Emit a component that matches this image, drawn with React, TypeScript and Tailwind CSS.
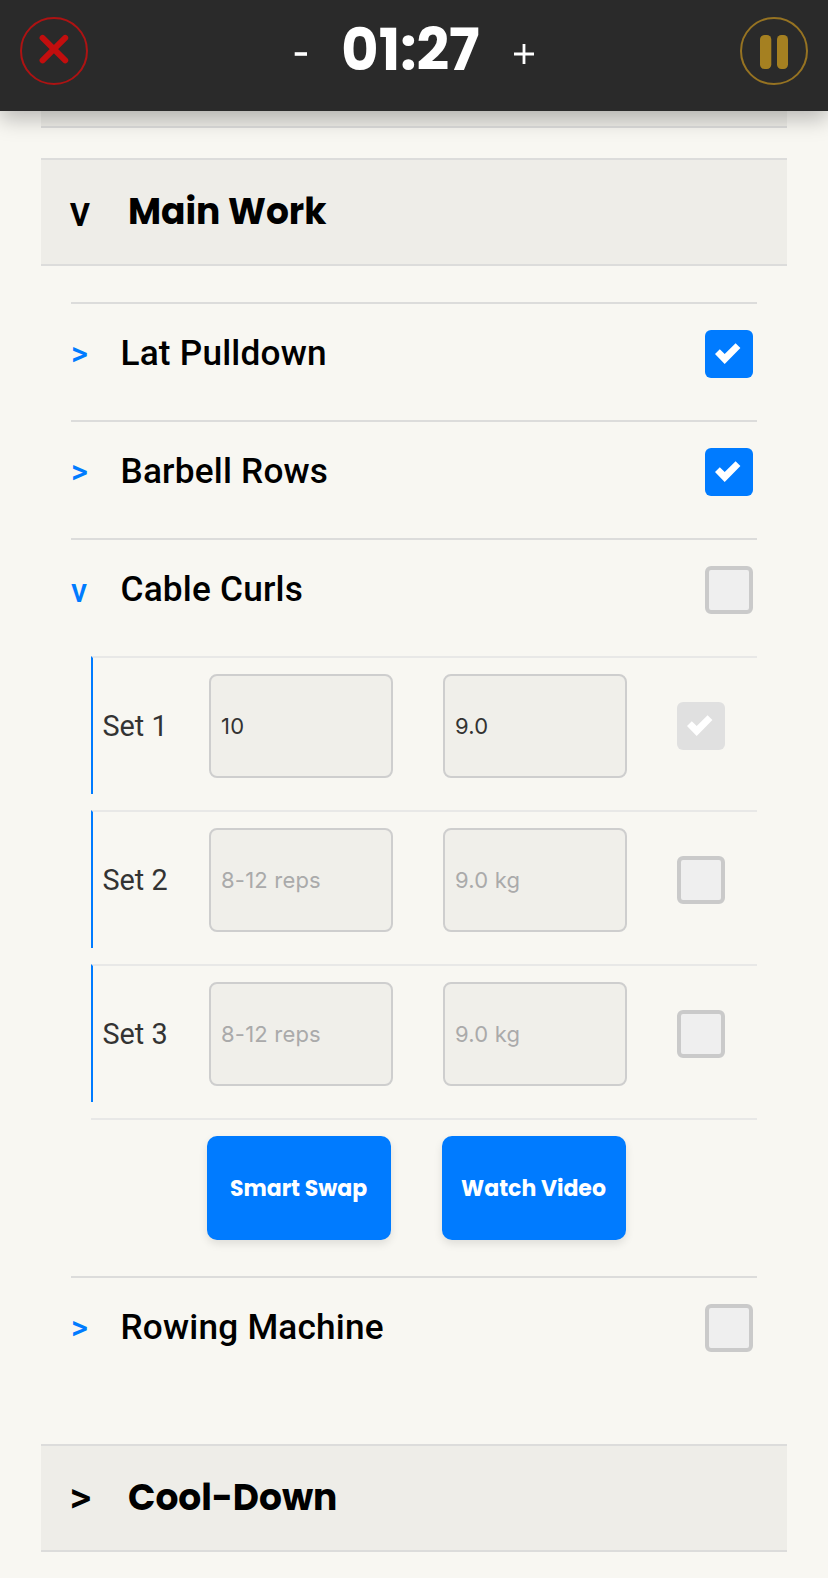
import React from "react";

const display = "font-['Poppins','Inter',sans-serif]";

function CheckBox({ checked = false, muted = false }: { checked?: boolean; muted?: boolean }) {
  if (!checked) {
    return <button aria-label="Mark done" className="size-12 shrink-0 rounded-md border-4 border-[#cacaca] bg-[#efefef]" />;
  }
  return (
    <button aria-label="Done" className={`size-12 shrink-0 rounded-md ${muted ? "bg-[#e0e0e0]" : "bg-[#007bff]"}`}>
      <svg viewBox="0 0 48 48" className="size-12">
        <path d="M10 24l4.8-4.8 4.9 4.9 10.9-10.8 4.8 4.8L19.7 34z" fill="#fff" />
      </svg>
    </button>
  );
}

function SectionBar({ title, open = false }: { title: string; open?: boolean }) {
  return (
    <div className="flex h-[108px] items-center border-y-2 border-[#dcdcdb] bg-[#eeede8] pl-[28.5px]">
      <span className="w-[58.5px] font-['Roboto'] text-[42px] leading-[52px] font-medium text-black">{open ? "v" : ">"}</span>
      <h2 className={`${display} text-[36px] leading-[52px] font-bold text-black`}>{title}</h2>
    </div>
  );
}

function Exercise({ name, done = false, open = false }: { name: string; done?: boolean; open?: boolean }) {
  return (
    <div className="flex h-[118px] items-start border-t-2 border-[#dcdcdb] pt-[26px] pr-1">
      <span className={`w-[49.5px] font-['Roboto'] text-[32.5px] font-medium text-[#007bff] ${open ? "leading-[50px]" : "leading-[48px]"}`}>
        {open ? "v" : ">"}
      </span>
      <h3 className="flex-1 font-['Roboto'] text-[35.2px] leading-[47px] font-medium tracking-[0.2px] text-black">{name}</h3>
      <CheckBox checked={done} />
    </div>
  );
}

function Field({ text, filled }: { text: string; filled: boolean }) {
  return (
    <div
      className={`flex h-[104px] w-[184px] items-center rounded-lg border-2 border-[#cecece] bg-[#f0efea] pl-2.5 font-['Inter'] text-[22px] tracking-[0.2px] ${filled ? "text-[#333]" : "text-[#aaa]"}`}
    >
      {text}
    </div>
  );
}

function SetRow({ n, reps, weight, done = false }: { n: number; reps: string; weight: string; done?: boolean }) {
  return (
    <div className="mb-4 flex h-[138px] items-start border-t-2 border-l-2 border-t-[#e8e8e7] border-l-[#007bff] pt-4">
      <span className="w-[116px] pl-[9.5px] font-['Roboto'] text-[28.8px] leading-[104px] text-[#333]">Set {n}</span>
      <Field text={reps} filled={done} />
      <div className="w-[50px]" />
      <Field text={weight} filled={done} />
      <div className="ml-[50px] flex h-[104px] items-center">
        <CheckBox checked={done} muted />
      </div>
    </div>
  );
}

function ActionButton({ label }: { label: string }) {
  return (
    <button
      className={`${display} h-[104px] w-[184px] rounded-[10px] bg-[#007bff] pr-px text-[22px] font-bold whitespace-nowrap text-white shadow-[0_4px_8px_rgba(0,0,0,0.1)]`}
    >
      {label}
    </button>
  );
}

export default function App() {
  return (
    <div className="h-[1578px] w-[828px] overflow-hidden bg-[#f8f7f2]">
      <header className="relative z-10 flex h-[111px] items-start justify-between bg-[#2a2a2a] px-5 pt-[17px] shadow-[0_8px_20px_rgba(0,0,0,0.25)]">
        <button aria-label="Close" className="size-[68px]">
          <svg viewBox="0 0 68 68" className="size-[68px]">
            <circle cx="34" cy="34" r="33" fill="none" stroke="#ad1313" strokeWidth="2" />
            <path d="M22.6 20.9l22.6 22.4M45.2 20.9L22.6 43.3" stroke="#c20e0e" strokeWidth="6" strokeLinecap="round" />
          </svg>
        </button>
        <div className="flex h-[68px] items-center text-white">
          <button aria-label="Less time" className="w-[14px]">
            <svg viewBox="0 0 14 20" className="mt-[5px] h-5 w-[14px]">
              <path d="M0.7 10H13" stroke="#fff" strokeWidth="3.6" />
            </svg>
          </button>
          <span className={`${display} w-[206px] pr-px pb-px text-center text-[57.2px] leading-[67px] font-bold`}>01:27</span>
          <button aria-label="More time" className="w-5">
            <svg viewBox="0 0 20 20" className="mt-[5px] size-5">
              <path d="M0 10h20M10 0v20" stroke="#fff" strokeWidth="2.8" />
            </svg>
          </button>
        </div>
        <button aria-label="Pause" className="size-[68px]">
          <svg viewBox="0 0 68 68" className="size-[68px]">
            <circle cx="34" cy="34" r="33" fill="none" stroke="#967322" strokeWidth="2" />
            <rect x="20" y="18" width="11.3" height="34" rx="4.5" fill="#a58021" />
            <rect x="37" y="18" width="11" height="34" rx="4.5" fill="#a58021" />
          </svg>
        </button>
      </header>

      <main className="mx-[41px]">
        <div className="mb-[30px] h-[17px] border-b-2 border-[#dcdcdb] bg-[#eeede8]" />
        <SectionBar title="Main Work" open />

        <div className="mx-[30px] mt-9 mb-[50px]">
          <Exercise name="Lat Pulldown" done />
          <Exercise name="Barbell Rows" done />
          <Exercise name="Cable Curls" open />
          <div className="ml-5 h-[620px]">
            <SetRow n={1} reps="10" weight="9.0" done />
            <SetRow n={2} reps="8-12 reps" weight="9.0 kg" />
            <SetRow n={3} reps="8-12 reps" weight="9.0 kg" />
            <div className="flex gap-[51px] border-t-2 border-[#e8e8e7] pt-4 pl-[116px]">
              <ActionButton label="Smart Swap" />
              <ActionButton label="Watch Video" />
            </div>
          </div>
          <Exercise name="Rowing Machine" />
        </div>

        <SectionBar title="Cool-Down" />
      </main>
    </div>
  );
}
